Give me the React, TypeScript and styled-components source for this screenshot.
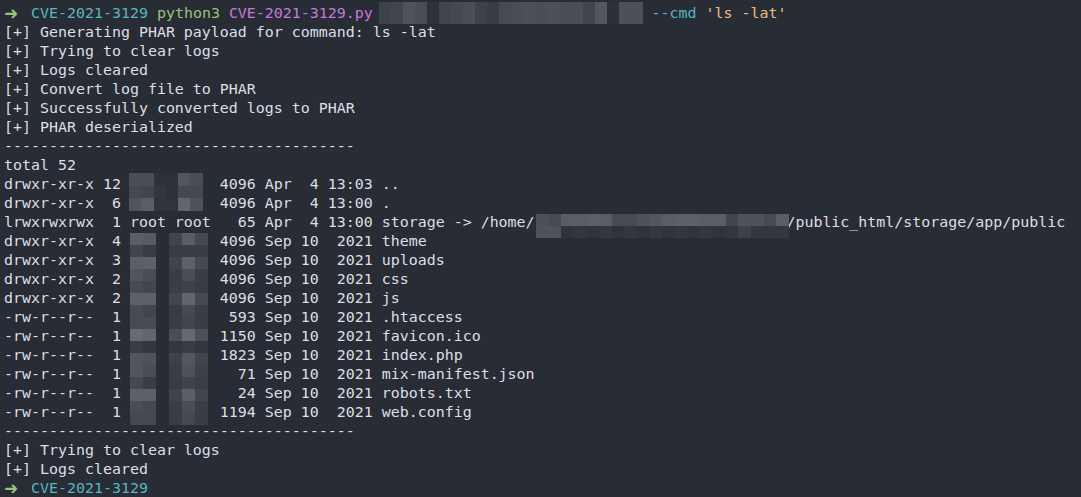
import React from "react";
import styled, { createGlobalStyle } from "styled-components";

const Global = createGlobalStyle`
  html, body { margin: 0; padding: 0; background: #282c34; }
  body { overflow: hidden; }
`;

const palette = {
  fg: "#dcdfe4",
  green: "#98c379",
  cyan: "#56b6c2",
  purple: "#c678dd",
  yellow: "#e5c07b",
};
type Tone = keyof typeof palette;

const Terminal = styled.div`
  position: relative;
  width: 1081px;
  height: 497px;
  box-sizing: border-box;
  padding: 4px 0 0 4px;
  background: #282c34;
  color: ${palette.fg};
  font-family: "DejaVu Sans Mono", "Liberation Mono", monospace;
  font-size: 14.95px;
  line-height: 19px;
  overflow: hidden;
`;

const Line = styled.div`
  height: 19px;
  white-space: pre;
`;

const Tok = styled.span<{ $c: Tone }>`
  color: ${(p) => palette[p.$c]};
`;

const Arrow = styled.span`
  display: inline-block;
  width: 27px;
  color: ${palette.green};
  font-family: "DejaVu Sans", sans-serif;
  font-size: 17px;
  line-height: 19px;
  vertical-align: top;
`;

const MosaicGrid = styled.div<{ $x: number; $y: number; $cols: number; $cw: number; $ch: number }>`
  position: absolute;
  left: ${(p) => p.$x}px;
  top: ${(p) => p.$y}px;
  display: grid;
  grid-template-columns: repeat(${(p) => p.$cols}, ${(p) => p.$cw}px);
  grid-auto-rows: ${(p) => p.$ch}px;
`;

const Cell = styled.div<{ $c: string }>`
  background: ${(p) => p.$c};
`;

type MosaicProps = { x: number; y: number; cw: number; ch: number; rows: string[][] };
const Mosaic = ({ x, y, cw, ch, rows }: MosaicProps) => (
  <MosaicGrid $x={x} $y={y} $cols={rows[0].length} $cw={cw} $ch={ch}>
    {rows.flatMap((r, i) => r.map((c, j) => <Cell key={`${i}-${j}`} $c={c} />))}
  </MosaicGrid>
);

const Prompt = ({ children }: { children?: React.ReactNode }) => (
  <Line>
    <Arrow>➜</Arrow>
    <Tok $c="cyan">CVE-2021-3129</Tok>
    {children}
  </Line>
);

const dashes = "-".repeat(39);

type Entry = { perm: string; links: string; owner?: string; size: string; date: string; name: string };
const entries: Entry[] = [
  { perm: "drwxr-xr-x", links: "12", size: "4096", date: "Apr  4 13:03", name: ".." },
  { perm: "drwxr-xr-x", links: "6", size: "4096", date: "Apr  4 13:00", name: "." },
  {
    perm: "lrwxrwxrwx",
    links: "1",
    owner: "root root",
    size: "65",
    date: "Apr  4 13:00",
    name: "storage -> /home/" + " ".repeat(28) + "/public_html/storage/app/public",
  },
  { perm: "drwxr-xr-x", links: "4", size: "4096", date: "Sep 10  2021", name: "theme" },
  { perm: "drwxr-xr-x", links: "3", size: "4096", date: "Sep 10  2021", name: "uploads" },
  { perm: "drwxr-xr-x", links: "2", size: "4096", date: "Sep 10  2021", name: "css" },
  { perm: "drwxr-xr-x", links: "2", size: "4096", date: "Sep 10  2021", name: "js" },
  { perm: "-rw-r--r--", links: "1", size: "593", date: "Sep 10  2021", name: ".htaccess" },
  { perm: "-rw-r--r--", links: "1", size: "1150", date: "Sep 10  2021", name: "favicon.ico" },
  { perm: "-rw-r--r--", links: "1", size: "1823", date: "Sep 10  2021", name: "index.php" },
  { perm: "-rw-r--r--", links: "1", size: "71", date: "Sep 10  2021", name: "mix-manifest.json" },
  { perm: "-rw-r--r--", links: "1", size: "24", date: "Sep 10  2021", name: "robots.txt" },
  { perm: "-rw-r--r--", links: "1", size: "1194", date: "Sep 10  2021", name: "web.config" },
];

const fmt = (e: Entry) =>
  `${e.perm} ${e.links.padStart(2)} ${(e.owner ?? "").padEnd(9)} ${e.size.padStart(4)} ${e.date} ${e.name}`;

const topMosaic = [
  [
    "#3e414a", "#42454d", "#4f525a", "#4a4d55", "#2f323a", "#42454d", "#464950", "#4b4e56",
    "#3e414a", "#3a3d45", "#474a52", "#4a4d55", "#4c4f57", "#4b4e56", "#4d5058", "#4b4e56",
    "#4a4d55", "#42454d", "#53565e", "#2d3038", "#4d5058", "#4d5058",
  ],
];

const mosaicA = [
  ["#4a4d55", "#4a4d55", "#2e3139", "#2e3139", "#52555d", "#4a4d55"],
  ["#45484f", "#42454d", "#33363e", "#2e3139", "#45484f", "#45484f"],
  ["#50535b", "#5a5d65", "#30333b", "#30333b", "#62656d", "#4f525a"],
];

const mosaicC = [
  [
    "#4d5058", "#474a52", "#5a5d65", "#5a5d65", "#5d6068", "#5a5d65", "#474a52", "#474a52",
    "#4f525a", "#53565e", "#5a5d65", "#5d6068", "#5d6068", "#5a5d65", "#5a5d65", "#42454d",
    "#4f525a", "#4f525a", "#474a52", "#5a5d65",
  ],
  [
    "#4f525a", "#4f525a", "#30333b", "#33363e", "#30333b", "#34373f", "#30333b", "#33363e",
    "#30333b", "#34373f", "#30333b", "#33363e", "#30333b", "#34373f", "#30333b", "#33363e",
    "#3e414a", "#34373f", "#34373f", "#34373f",
  ],
];

const mosaicBLeft = [
  ["#5b5e66", "#575a62"],
  ["#41444c", "#383b43"],
  ["#5b5e66", "#5d6068"],
  ["#52555d", "#4a4d55"],
  ["#474a52", "#42454d"],
  ["#5d6068", "#5d6068"],
  ["#484b53", "#42454d"],
  ["#484b53", "#484b53"],
  ["#676a72", "#62656d"],
  ["#3a3d45", "#33363e"],
  ["#52555d", "#4f525a"],
  ["#52555d", "#4a4d55"],
  ["#45484f", "#3a3d45"],
  ["#5d6068", "#5d6068"],
  ["#4a4d55", "#45484f"],
  ["#45484f", "#45484f"],
];

const mosaicBRight = [
  ["#41444c", "#595c64", "#464950"],
  ["#383b43", "#3a3d45", "#3a3d45"],
  ["#40434b", "#5d6068", "#464950"],
  ["#3a3d45", "#4a4d55", "#3a3d45"],
  ["#3a3d45", "#3e414a", "#383b43"],
  ["#42454d", "#62656d", "#464950"],
  ["#383b43", "#464950", "#3a3d45"],
  ["#3a3d45", "#42454d", "#3a3d45"],
  ["#4a4d55", "#676a72", "#4d5058"],
  ["#33363e", "#383b43", "#33363e"],
  ["#3e414a", "#53565e", "#41444c"],
  ["#3a3d45", "#4f525a", "#3e414a"],
  ["#383b43", "#40434b", "#3a3d45"],
  ["#40434b", "#5b5e66", "#42454d"],
  ["#3a3d45", "#4a4d55", "#3a3d45"],
  ["#3a3d45", "#45484f", "#3a3d45"],
];

export default function App() {
  return (
    <>
      <Global />
      <Terminal>
        <Prompt>
          {" "}
          <Tok $c="green">python3</Tok> <Tok $c="purple">CVE-2021-3129.py</Tok>
          {" ".repeat(31)}
          <Tok $c="cyan">--cmd</Tok> <Tok $c="yellow">'ls -lat'</Tok>
        </Prompt>
        <Line>[+] Generating PHAR payload for command: ls -lat</Line>
        <Line>[+] Trying to clear logs</Line>
        <Line>[+] Logs cleared</Line>
        <Line>[+] Convert log file to PHAR</Line>
        <Line>[+] Successfully converted logs to PHAR</Line>
        <Line>[+] PHAR deserialized</Line>
        <Line>{dashes}</Line>
        <Line>total 52</Line>
        {entries.map((e, i) => (
          <Line key={i}>{fmt(e)}</Line>
        ))}
        <Line>{dashes}</Line>
        <Line>[+] Trying to clear logs</Line>
        <Line>[+] Logs cleared</Line>
        <Prompt />

        <Mosaic x={379} y={2} cw={12} ch={22} rows={topMosaic} />
        <Mosaic x={129} y={173} cw={12.3} ch={12.7} rows={mosaicA} />
        <Mosaic x={536} y={214} cw={12.65} ch={12} rows={mosaicC} />
        <Mosaic x={130} y={233} cw={13} ch={12} rows={mosaicBLeft} />
        <Mosaic x={169} y={233} cw={13} ch={12} rows={mosaicBRight} />
      </Terminal>
    </>
  );
}
